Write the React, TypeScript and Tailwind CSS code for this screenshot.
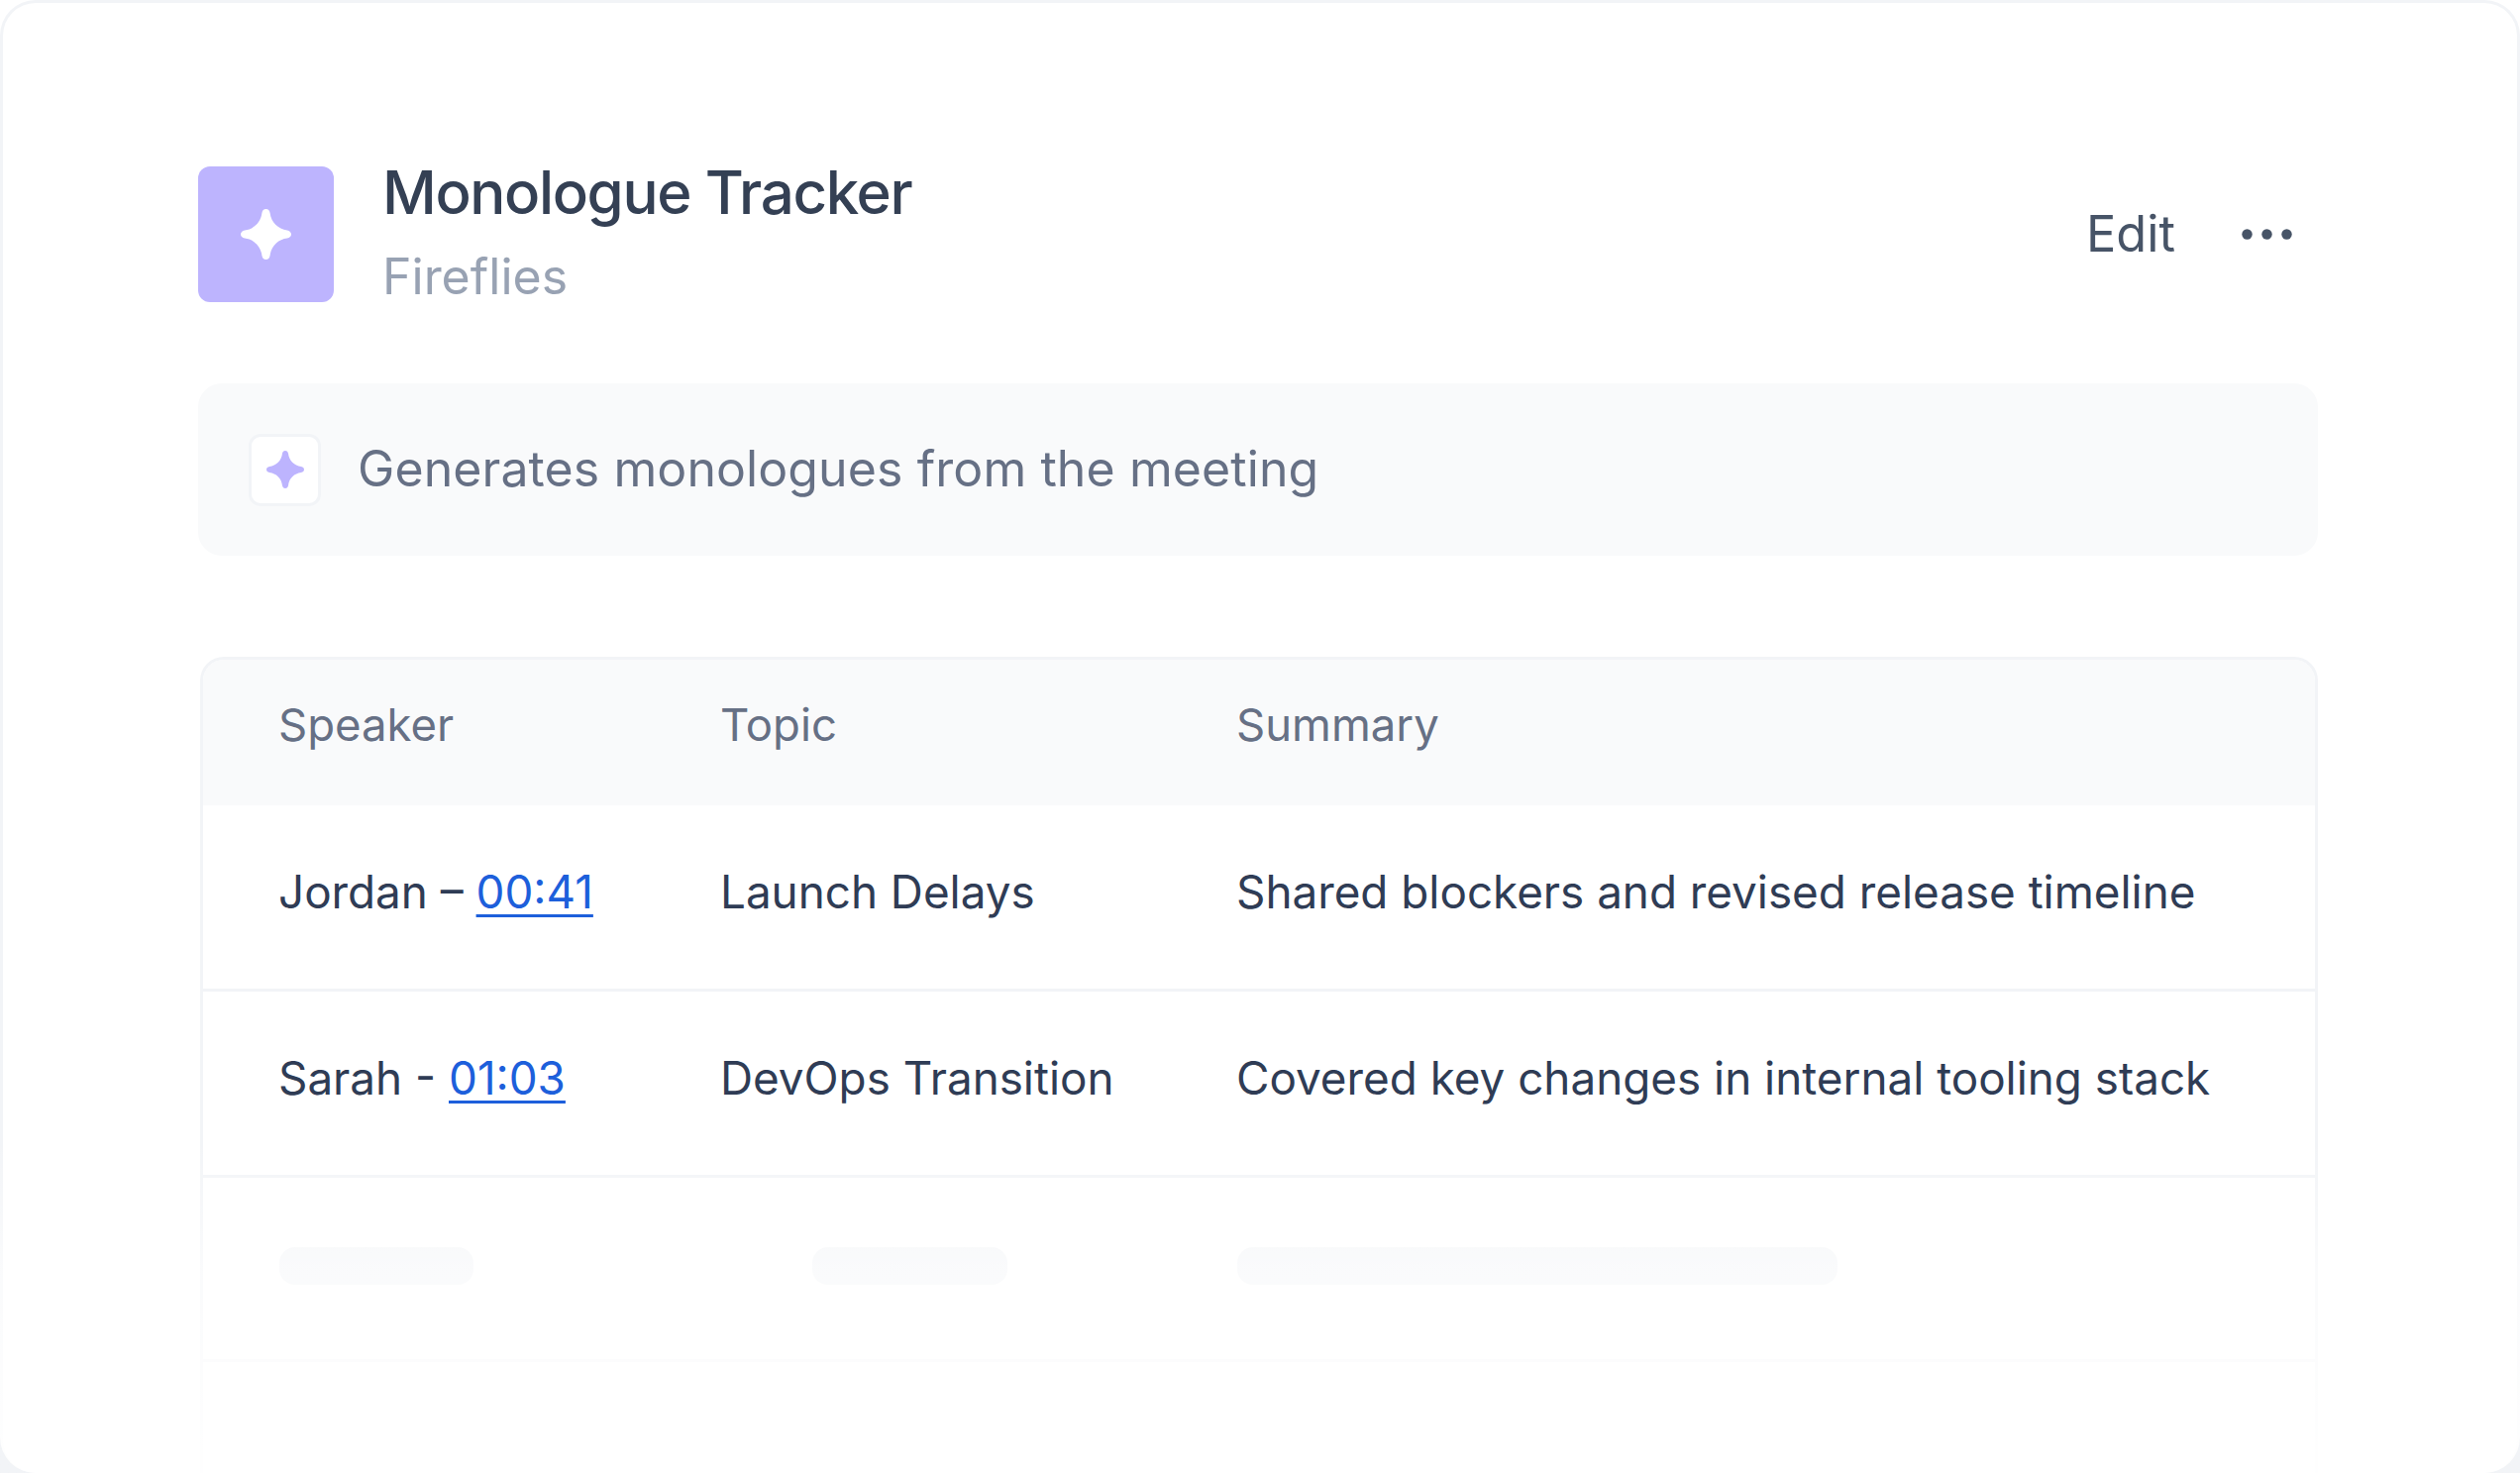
const FONT = "font-['Inter',sans-serif]";

function Star({ className }: { className: string }) {
  return (
    <svg viewBox="0 0 100 100" className={className} fill="currentColor">
      <path d="M50 0C54.500 0 57 3 58 8C60 26 74 40 92 42C97 43 100 46 100 50C100 54 97 57 92 58C74 60 60 74 58 92C57 97 54.500 100 50 100C45.500 100 43 97 42 92C40 74 26 60 8 58C3 57 0 54 0 50C0 46 3 43 8 42C26 40 40 26 42 8C43 3 45.500 0 50 0Z" />
    </svg>
  );
}

function Row({ speaker, link, topic, summary }: { speaker: string; link: string; topic: string; summary: string }) {
  return (
    <div className="grid h-[188px] grid-cols-[446px_521px_1fr] items-center border-b-[3px] border-[#f2f4f7] pb-[8px] pl-[76px] text-[45.800px] text-[#2f3c55]">
      <div className="whitespace-nowrap">
        {speaker} <a className="text-[#1d5fdb] underline decoration-[3px] underline-offset-[6px]">{link}</a>
      </div>
      <div className="whitespace-nowrap">{topic}</div>
      <div className="whitespace-nowrap">{summary}</div>
    </div>
  );
}

export default function App() {
  return (
    <div className={`${FONT} h-[1487px] w-full bg-gradient-to-b from-white from-[94%] to-[#f2f4f7] to-[97%]`}>
      <div className="relative h-full overflow-hidden rounded-[36px] bg-[#f2f4f7] p-[3px] pb-0">
        <div className="h-full rounded-[33px] bg-white pt-[165px] pr-[201px] pl-[197px]">
          <header className="flex h-[137px] items-center">
            <div className="flex h-[137px] w-[137px] items-center justify-center rounded-[12px] bg-[#bdb4fe] text-white">
              <Star className="h-[51px] w-[51px]" />
            </div>
            <div className="ml-[49px] flex flex-1 flex-col pb-[6px]">
              <h1 className="text-[60px] leading-[72px] font-medium tracking-[-1.350px] text-[#344054]">Monologue Tracker</h1>
              <p className="mt-[19px] text-[50px] leading-[60px] text-[#98a2b3]">Fireflies</p>
            </div>
            <div className="mr-[26px] flex items-center gap-[67px]">
              <span className="pb-[2px] text-[50.500px] leading-[60px] text-[#475467]">Edit</span>
              <svg viewBox="0 0 51 11" className="h-[11px] w-[51px] fill-[#475467]">
                <circle cx="5.500" cy="5.500" r="5.200" />
                <circle cx="25.500" cy="5.500" r="5.200" />
                <circle cx="45.500" cy="5.500" r="5.200" />
              </svg>
            </div>
          </header>

          <section className="mt-[82px] flex h-[174px] items-center rounded-[24px] bg-[#f9fafb] pl-[51px]">
            <div className="flex h-[73px] w-[73px] items-center justify-center rounded-[12px] border-[3px] border-[#f2f4f7] bg-white text-[#bdb4fe]">
              <Star className="h-[38px] w-[38px]" />
            </div>
            <p className="ml-[37px] pb-[3px] text-[50px] leading-[60px] tracking-[0.090px] text-[#667085]">Generates monologues from the meeting</p>
          </section>

          <section className="mt-[102px] ml-[2px] overflow-hidden rounded-t-[24px] border-x-[3px] border-t-[3px] border-[#f2f4f7]">
            <div className="grid h-[147px] grid-cols-[446px_521px_1fr] items-center bg-[#f9fafb] pb-[14px] pl-[76px] text-[45.500px] text-[#667085]">
              <div>Speaker</div>
              <div>Topic</div>
              <div>Summary</div>
            </div>
            <Row speaker="Jordan –" link="00:41" topic="Launch Delays" summary="Shared blockers and revised release timeline" />
            <Row speaker="Sarah -" link="01:03" topic="DevOps Transition" summary="Covered key changes in internal tooling stack" />
            <div className="flex h-[186px] items-center border-b-[3px] border-[#f2f4f7] pb-[6px] pl-[77px]">
              <div className="h-[38px] w-[196px] rounded-[16px] bg-[#f2f4f7]" />
              <div className="ml-[342px] h-[38px] w-[197px] rounded-[16px] bg-[#f2f4f7]" />
              <div className="ml-[232px] h-[38px] w-[606px] rounded-[16px] bg-[#f2f4f7]" />
            </div>
            <div className="h-[200px]" />
          </section>
        </div>

        <div className="absolute inset-x-0 top-[1150px] bottom-0 bg-gradient-to-b from-white/0 via-white/60 via-[38%] to-white/95" />
      </div>
    </div>
  );
}
